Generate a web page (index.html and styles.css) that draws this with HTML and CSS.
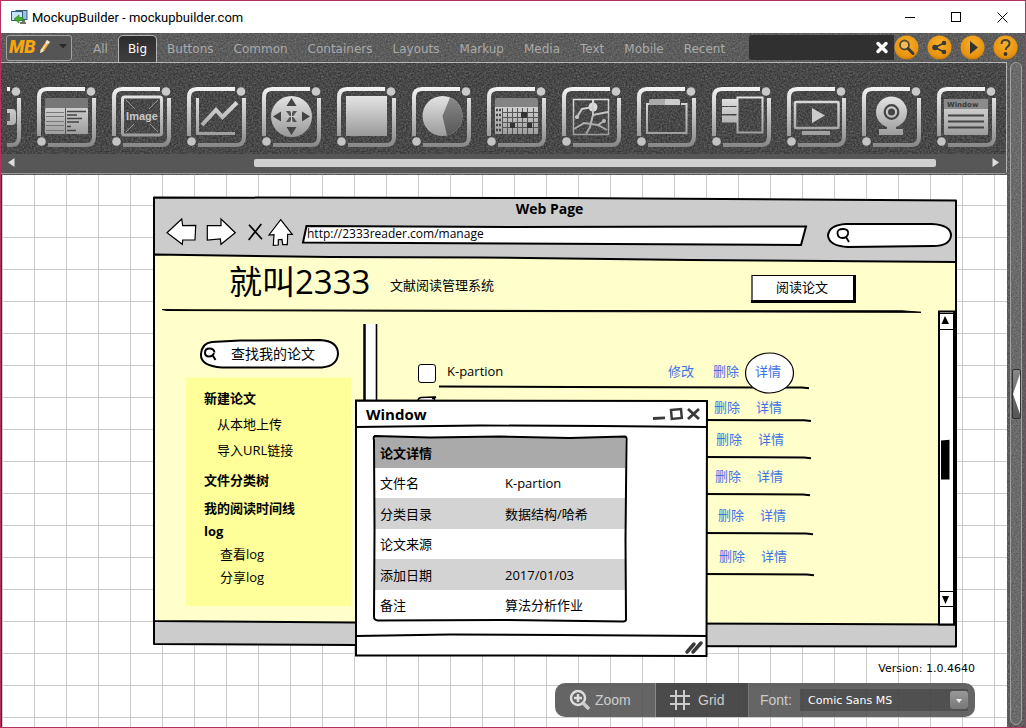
FILE: index.html
```html
<!DOCTYPE html>
<html lang="zh-CN">
<head>
<meta charset="utf-8">
<title>MockupBuilder - mockupbuilder.com</title>
<link rel="stylesheet" href="styles.css">
</head>
<body>
<svg class="defs" width="0" height="0" aria-hidden="true">
  <defs>
    <linearGradient id="metal" gradientUnits="userSpaceOnUse" x1="0" y1="0" x2="0" y2="60">
      <stop offset="0" stop-color="#f4f4f4"/><stop offset="1" stop-color="#868686"/>
    </linearGradient>
    <linearGradient id="steel" gradientUnits="userSpaceOnUse" x1="0" y1="8" x2="0" y2="50">
      <stop offset="0" stop-color="#8c8c8c"/><stop offset="1" stop-color="#555"/>
    </linearGradient>
    <radialGradient id="amber" cx="50%" cy="35%" r="65%">
      <stop offset="0" stop-color="#f7b02c"/><stop offset="0.8" stop-color="#e8930f"/><stop offset="1" stop-color="#c97c0c"/>
    </radialGradient>
    <g id="frame">
      <path d="M2 49V10q0-8 8-8H48M57 11V50q0 8-8 8H11" fill="none" stroke="url(#metal)" stroke-width="4"/>
      <circle cx="54" cy="4.500" r="4.300" fill="#c9c9c9"/>
      <circle cx="4.500" cy="54.500" r="4.300" fill="#c4c4c4"/>
    </g>
  </defs>
</svg>

<div class="window">
  <header class="titlebar">
    <svg class="titlebar-icon" width="17" height="14" viewBox="0 0 17 14">
      <rect x="5" y="0.500" width="11" height="9" fill="#8fc4ea" stroke="#3b5c78"/>
      <rect x="0.500" y="1.500" width="11" height="9" fill="#c5e3f7" stroke="#3b5c78"/>
      <path d="M9 13h6M11 11h3" stroke="#444" stroke-width="1.500"/>
      <path d="M3 9l5-4v2.500h4v3H8V13z" fill="#43b02a" stroke="#2a7a18" stroke-width=".6"/>
    </svg>
    <h1 class="titlebar-text">MockupBuilder - mockupbuilder.com</h1>
    <div class="titlebar-buttons">
      <button type="button" aria-label="Minimize"><svg width="11" height="11"><path d="M0 5.500h10" stroke="#000"/></svg></button>
      <button type="button" aria-label="Maximize"><svg width="11" height="11"><rect x=".5" y=".5" width="9" height="9" fill="none" stroke="#000"/></svg></button>
      <button type="button" aria-label="Close"><svg width="11" height="11"><path d="M.5.5l10 10M10.500.5l-10 10" stroke="#000"/></svg></button>
    </div>
  </header>

  <div class="app">
    <div class="topbar">
      <button type="button" class="logo" aria-label="Menu">
        <span class="logo-text">MB</span>
        <svg width="12" height="15" viewBox="0 0 12 15">
          <path d="M1 14l1-4 6-9 3 2-6 9z" fill="#f2a93b"/><path d="M8 1l3 2-1.500 2-3-2z" fill="#e9dccb"/><path d="M1 14l1-4 3 2z" fill="#f5e2c0"/><path d="M3 11l5.500-8" stroke="#fff" stroke-width="1"/>
        </svg>
        <svg width="8" height="5"><path d="M0 0h8L4 4.500z" fill="#2a2a2a"/></svg>
      </button>
      <nav class="tabs">
        <a href="#all">All</a>
        <a href="#big" class="active">Big</a>
        <a href="#buttons">Buttons</a>
        <a href="#common">Common</a>
        <a href="#containers">Containers</a>
        <a href="#layouts">Layouts</a>
        <a href="#markup">Markup</a>
        <a href="#media">Media</a>
        <a href="#text">Text</a>
        <a href="#mobile">Mobile</a>
        <a href="#recent">Recent</a>
      </nav>
      <div class="finder">
        <input type="text" aria-label="Search components">
        <button type="button" aria-label="Clear"><svg width="14" height="14" viewBox="0 0 14 14"><path d="M3 2.500l8 8M11 2.500l-8 8" stroke="#fff" stroke-width="3.500" stroke-linecap="round"/></svg></button>
      </div>
      <div class="actions">
        <button type="button" aria-label="Search"><svg viewBox="0 0 25 25"><circle cx="12.500" cy="12.500" r="12" fill="url(#amber)"/><circle cx="10.500" cy="10" r="4.500" fill="#f3bd5c" stroke="#5b4a2e" stroke-width="1.800"/><path d="M14 13.500l5 5" stroke="#3b3b3b" stroke-width="3" stroke-linecap="round"/></svg></button>
        <button type="button" aria-label="Share"><svg viewBox="0 0 25 25"><circle cx="12.500" cy="12.500" r="12" fill="url(#amber)"/><path d="M17 8L8 12.500l9 4.500" fill="none" stroke="#3a3a3a" stroke-width="1.800"/><circle cx="17" cy="8" r="2.300" fill="#3a3a3a"/><circle cx="8" cy="12.500" r="2.800" fill="#3a3a3a"/><circle cx="17" cy="17" r="2.300" fill="#3a3a3a"/></svg></button>
        <button type="button" aria-label="Play"><svg viewBox="0 0 25 25"><circle cx="12.500" cy="12.500" r="12" fill="url(#amber)"/><path d="M10 6l8 6.500-8 6.500z" fill="#333"/></svg></button>
        <button type="button" aria-label="Help"><svg viewBox="0 0 25 25"><circle cx="12.500" cy="12.500" r="12" fill="url(#amber)"/><path d="M8.500 9q0-4 4-4t4 3.500q0 2-2 3.300-1.700 1.200-1.700 3.200" fill="none" stroke="#4a4030" stroke-width="2"/><circle cx="12.500" cy="19" r="1.900" fill="#333"/></svg></button>
      </div>
    </div>

    <div class="body">
      <main class="work">
        <section class="ribbon">
          <div class="tiles">
            <svg class="tile" viewBox="0 0 60 60"><use href="#frame"/><path d="M40 22h10q4 0 4 4v8q0 4-4 4H40z" fill="url(#metal)"/><path d="M44 26h4v8h-4z" fill="#555"/></svg>
            <svg class="tile" viewBox="0 0 60 60"><use href="#frame"/>
              <rect x="8" y="21" width="43" height="26" rx="1" fill="url(#metal)"/><rect x="8" y="11" width="43" height="10" rx="1" fill="#777"/>
              <path d="M28.500 21v26" stroke="#555"/><path d="M9 25.500h18M9 29.500h18M9 34.500h18M9 38.500h18M9 43.500h18" stroke="#777"/>
              <path d="M30 24.500h19M30 28h10M30 31.500h15M30 35h12M30 39.500h4M30 43.500h9" stroke="#444" stroke-width="1.500"/></svg>
            <svg class="tile" viewBox="0 0 60 60"><use href="#frame"/>
              <rect x="10.500" y="10" width="39" height="38" rx="2" fill="none" stroke="url(#metal)" stroke-width="3"/>
              <path d="M14 13l9 9M46 13l-9 9M14 45l8-8M46 45l-8-8" stroke="#999" stroke-width="1"/>
              <text x="30" y="33" class="tile-image">Image</text></svg>
            <svg class="tile" viewBox="0 0 60 60"><use href="#frame"/><path d="M10.500 11v35.500H48" fill="none" stroke="url(#metal)" stroke-width="3"/><path d="M15 38l14-15 6.500 7L50 15.500" fill="none" stroke="url(#metal)" stroke-width="4"/></svg>
            <svg class="tile" viewBox="0 0 60 60"><use href="#frame"/><circle cx="29.500" cy="29.500" r="20.500" fill="url(#metal)"/>
              <path d="M29.500 11l5 8h-10zM29.500 48l5-8h-10zM11 29.500l8-5v10zM48 29.500l-8-5v10z" fill="#444"/>
              <path d="M24 24h4l1.500 3 1.500-3h4l-4 5.500 4 5.500h-4l-1.500-3-1.500 3h-4l4-5.500z" fill="#555"/><path d="M29.500 23.500v12M23 29.500h13" stroke="#ccc"/></svg>
            <svg class="tile" viewBox="0 0 60 60"><use href="#frame"/><rect x="9" y="9" width="41" height="40" fill="url(#metal)"/></svg>
            <svg class="tile" viewBox="0 0 60 60"><use href="#frame"/><circle cx="30.500" cy="29" r="20" fill="url(#metal)"/><path d="M30.500 29L38 10.500A20 20 0 0 1 35 48.500z" fill="url(#steel)"/></svg>
            <svg class="tile" viewBox="0 0 60 60"><use href="#frame"/><rect x="8" y="20" width="43" height="27" fill="url(#metal)"/><path d="M8 20v-7q0-2 2-2h39q2 0 2 2v7z" fill="#848484"/>
              <path d="M15.500 21v26M20.500 21v26M25.500 21v26M30.500 21v26M35.500 21v26M40.500 21v26M46.500 21v26M15 25.500h36M15 30.500h36M15 35.500h36M15 40.500h36" stroke="#555" stroke-width="1"/>
              <path d="M34 25h6v6h-6zM23 36h5v5h-5zM40 36h5v5h-5z" fill="#333"/><path d="M9 23h5M9 28h5M9 33h5M9 38h5M9 43h5" stroke="#444" stroke-width="2.500" stroke-dasharray="2 1"/></svg>
            <svg class="tile" viewBox="0 0 60 60"><use href="#frame"/><rect x="11.500" y="12.500" width="35" height="35" fill="none" stroke="url(#metal)" stroke-width="1.500"/>
              <circle cx="31" cy="20" r="4.500" fill="#ddd"/><circle cx="15" cy="30" r="2" fill="#ccc"/><circle cx="42" cy="34" r="2" fill="#bbb"/>
              <path d="M31 13v7M31 20l-11 2-5 8M31 20v8l-3 12-4 7M31 28l15-3M12 42l10-6 14 2 6-4M36 38l9 5" fill="none" stroke="url(#metal)" stroke-width="2"/></svg>
            <svg class="tile" viewBox="0 0 60 60"><use href="#frame"/><path d="M12 17H10v29h39.500V17H44" fill="none" stroke="url(#metal)" stroke-width="2"/><path d="M12 18v-4q0-2 2-2h27q2 0 2 2v4z" fill="#aaa"/><path d="M28 12h13q2 0 2 2v4H28z" fill="#ccc"/></svg>
            <svg class="tile" viewBox="0 0 60 60"><use href="#frame"/><rect x="25.500" y="10.500" width="25" height="35" fill="none" stroke="url(#metal)" stroke-width="2"/><path d="M10 12h15v7H10zM10 20h15v7H10zM10 28.500h15v7H10z" fill="url(#metal)"/></svg>
            <svg class="tile" viewBox="0 0 60 60"><use href="#frame"/><rect x="8" y="15" width="43.500" height="26" rx="1" fill="none" stroke="url(#metal)" stroke-width="2.500"/><path d="M25 21l13 7.500L25 36z" fill="#ccc"/><path d="M15 44h28v4H15z" fill="url(#metal)"/></svg>
            <svg class="tile" viewBox="0 0 60 60"><use href="#frame"/><circle cx="29.500" cy="25" r="15.500" fill="url(#metal)"/><path d="M25 38h9v4h7v6H17v-6h8z" fill="url(#metal)"/><circle cx="29.500" cy="25" r="6.800" fill="none" stroke="#444" stroke-width="2.200"/><circle cx="29.500" cy="25" r="3.500" fill="#444"/></svg>
            <svg class="tile" viewBox="0 0 60 60"><use href="#frame"/><rect x="7" y="12" width="44" height="36" rx="1" fill="url(#metal)"/><path d="M7 12h44v10H7z" fill="#8b8b8b"/><text x="10" y="20" class="tile-window">Window</text><path d="M11 28.500h36M11 34.500h36M11 40.500h36" stroke="#444" stroke-width="2"/></svg>
          </div>
          <div class="hscroll">
            <button type="button" aria-label="Scroll left"><svg width="7" height="9"><path d="M6.500 0v9L0 4.500z" fill="#ddd"/></svg></button>
            <div class="hscroll-track"><div class="hscroll-thumb"></div></div>
            <button type="button" aria-label="Scroll right"><svg width="7" height="9"><path d="M.5 0v9L7 4.500z" fill="#ddd"/></svg></button>
          </div>
        </section>

        <section class="canvas">
          <article class="page">
            <svg class="sketch" viewBox="153 196 805 452" width="805" height="452" aria-hidden="true">
              <g stroke="#000" stroke-width="2" stroke-linejoin="round">
                <path d="M154 197.500L560 198 956 200.500V646.500L560 646 154 644z" fill="#ccc"/>
                <path d="M154 254.500L330 257 480 257.500 690 260 956 262V624.500L355 622.500 154 621z" fill="#ffffcc"/>
              </g>
              <g fill="#fff" stroke="#000" stroke-width="1.200">
                <path d="M167 232.700L181.700 219l1 6.700 13-.4-.7 14.700h-12.300l-.4 4.300z"/>
                <path d="M207.300 225.700H221V219l14.300 13.700L221 244.300l-.7-5.300-13 1z"/>
                <path d="M280.700 219.700l11.600 14.600h-4.600l-.4 10.400h-4.600l-.7-5.400-3.700.4v5.300l-5 .3.700-10.600-5 .3z"/>
                <path d="M249 224.700l13 14.600M261.300 224l-12.600 16" stroke-width="1.700"/>
              </g>
              <g fill="#fff" stroke="#000" stroke-width="2">
                <path d="M306.500 226L510 227 806 226.500 801 245 510 243.500 303 242.500z"/>
                <path d="M846 224H932Q951 225 951 235.500 950 246 933 246L848 247Q829 246 828 235.500 829 225 846 224z"/>
                <path d="M212 342L240 340.500 320 340Q338 341 338 354 337 366 322 367.500L222 367.500Q200 366 201 354 202 343 212 342z"/>
              </g>
              <g fill="none" stroke="#000" stroke-width="1.800">
                <path d="M848 234q-1 4-5.500 4t-5-4.500 5.500-4.500 5 5M846 237l3 5"/>
                <path d="M214 353q-1 3.500-5 3.500t-4-4 4.500-4 5 4M212.500 355l3 5" stroke-width="2"/>
              </g>
              <path d="M162 309.500l30 .3 370 .7 340 .3 19 1.500h-19L500 311.500 167 310.500z" fill="#000" stroke="#000"/>
              <path d="M365.500 324H376V404H365.500z" fill="#fff"/><path d="M364.500 324V404" stroke="#000" stroke-width="2.500"/><path d="M376.500 324V404" stroke="#000" stroke-width="1.600"/>
              <path d="M186 377.500H351V606H186z" fill="#ffff99"/>
              <path d="M752 275.500H855V301.500H752z" fill="#fff" stroke="#000" stroke-width="1.200"/><path d="M751 301.500H854.500V275" fill="none" stroke="#000" stroke-width="3"/>
              <g fill="none" stroke="#000" stroke-width="2">
                <path d="M439 386.500L570 387 802 387.500l7 .8"/><path d="M700 420l104 .3 7 .8"/><path d="M700 457l104 .5 7 .8"/><path d="M700 494l103 .5 7 .8"/><path d="M700 533l106 .5 7 .8"/><path d="M700 574l107 .5 7 .8"/>
              </g>
              <path d="M418 401q0-3 3-3.500l13-.5 1 6" fill="#fff" stroke="#000" stroke-width="1.500"/><path d="M432 398.500l4-1.500" stroke="#000" stroke-width="2"/>
              <ellipse cx="769.500" cy="373" rx="24" ry="20" fill="#fff" stroke="#000" stroke-width="1.200"/>
              <path d="M939 311.500H955V624.500H939z" fill="#fff" stroke="#000" stroke-width="2"/><path d="M954 312V624" stroke="#000" stroke-width="2"/>
              <path d="M940 313.500H953M940 329.500H953M940 591.500H953M940 606.500H953" stroke="#000" stroke-width="1.200"/>
              <path d="M945 316l4 8h-7.500zM945.500 604l-3.500-8h7z" fill="#000"/><path d="M941 440.500l8.500-.8V479.500H941z" fill="#000"/>
            </svg>

            <h2 class="page-title">Web Page</h2>
            <input class="address" type="text" aria-label="Address" value="http://2333reader.com/manage">
            <input class="page-search" type="text" aria-label="Search page">
            <p class="brand">就叫2333</p>
            <p class="tagline">文献阅读管理系统</p>
            <button type="button" class="read">阅读论文</button>

            <input class="side-search" type="text" aria-label="查找" value="查找我的论文">
            <nav class="side">
              <h3>新建论文</h3>
              <a href="#upload">从本地上传</a>
              <a href="#import">导入URL链接</a>
              <h3>文件分类树</h3>
              <h3>我的阅读时间线</h3>
              <h3 class="tight">log</h3>
              <a href="#viewlog" class="log">查看log</a>
              <a href="#sharelog" class="log">分享log</a>
            </nav>

            <label class="paper"><input type="checkbox"><span>K-partion</span></label>
            <div class="links row-1"><a href="#e1">修改</a><a href="#d1">删除</a><a href="#i1">详情</a></div>
            <div class="links row-2"><a href="#d2">删除</a><a href="#i2">详情</a></div>
            <div class="links row-3"><a href="#d3">删除</a><a href="#i3">详情</a></div>
            <div class="links row-4"><a href="#d4">删除</a><a href="#i4">详情</a></div>
            <div class="links row-5"><a href="#d5">删除</a><a href="#i5">详情</a></div>
            <div class="links row-6"><a href="#d6">删除</a><a href="#i6">详情</a></div>
          </article>

          <article class="dialog">
            <svg class="sketch" viewBox="354 399 354 258" width="354" height="258" aria-hidden="true">
              <path d="M356 400.500L707 401 706.500 656 530 655.500 356 655.500z" fill="#fff" stroke="#000" stroke-width="2"/>
              <path d="M356 427L480 425.500 600 426 707 427M356 636L450 634.500 560 635 707 636" fill="none" stroke="#000" stroke-width="2"/>
              <g fill="none" stroke="#3a3a3a" stroke-width="2.800">
                <path d="M653 418.500l12-.7"/><path d="M671 410l10-1 .8 9-10 1z" stroke-width="2.500"/><path d="M688 409l11 10M699 409l-11 10"/>
                <path d="M687 652l7-8M693 652l8-9" stroke-width="3.500" stroke-linecap="round"/>
              </g>
            </svg>
            <h2 class="dialog-title">Window</h2>
            <div class="details">
              <table>
                <thead><tr><th>论文详情</th><th></th></tr></thead>
                <tbody>
                  <tr><td>文件名</td><td>K-partion</td></tr>
                  <tr><td>分类目录</td><td>数据结构/哈希</td></tr>
                  <tr><td>论文来源</td><td></td></tr>
                  <tr><td>添加日期</td><td>2017/01/03</td></tr>
                  <tr><td>备注</td><td>算法分析作业</td></tr>
                </tbody>
              </table>
              <svg class="sketch" viewBox="372 435 256 188" width="256" height="188" aria-hidden="true">
                <path d="M375 436L430 437.500 500 436.500 570 438 625 436.500Q627 437 626.500 441L625.500 540 626 619.500Q626 621.500 623 621.500L500 620 378 620.500Q374 620 374 617L374.500 530 374 440Q373 437 375 436z" fill="none" stroke="#000" stroke-width="2"/>
              </svg>
            </div>
          </article>

          <div class="dock">
            <p class="version">Version: 1.0.4640</p>
            <div class="dock-bar">
              <button type="button" class="dock-zoom"><svg width="22" height="22" viewBox="0 0 22 22"><circle cx="9" cy="9" r="7" fill="none" stroke="#ddd" stroke-width="2.500"/><path d="M9 5v8M5 9h8" stroke="#ddd" stroke-width="2.500"/><path d="M14 14l6 6" stroke="#ccc" stroke-width="3.500"/></svg>Zoom</button>
              <button type="button" class="dock-grid"><svg width="20" height="20" viewBox="0 0 20 20"><path d="M6 0v20M14 0v20M0 6h20M0 14h20" stroke="#ccc" stroke-width="2"/></svg>Grid</button>
              <label class="dock-label" for="font">Font:</label>
              <div class="dock-select">
                <select id="font"><option>Comic Sans MS</option></select>
                <span class="dock-arrow"></span>
              </div>
            </div>
          </div>
        </section>
      </main>
      <aside class="rail">
        <div class="rail-tube">
          <button type="button" aria-label="Open panel"><svg width="7" height="40"><path d="M7 0v40L0 20z" fill="#fff"/></svg></button>
        </div>
      </aside>
    </div>
  </div>
</div>
</body>
</html>
```

FILE: styles.css
```css
* { box-sizing: border-box; margin: 0; padding: 0; }

:root {
  --ui: "DejaVu Sans", Verdana, sans-serif;
  --hand: "Comic Sans MS", "Open Sans", "Noto Sans CJK SC", sans-serif;
  --noise: url("data:image/svg+xml,%3Csvg xmlns='http://www.w3.org/2000/svg' width='128' height='128'%3E%3Cfilter id='n'%3E%3CfeTurbulence type='fractalNoise' baseFrequency='.6' numOctaves='2' stitchTiles='stitch'/%3E%3CfeColorMatrix values='0 0 0 0 .5 0 0 0 0 .5 0 0 0 0 .5 .6 0 0 0 -.15'/%3E%3C/filter%3E%3Crect width='128' height='128' filter='url(%23n)'/%3E%3C/svg%3E");
}

.defs { position: absolute; }

button, input, select { font: inherit; color: inherit; background: none; border: 0; outline: 0; }
button { cursor: pointer; }
a { color: inherit; text-decoration: none; }

.window {
  display: flex;
  flex-direction: column;
  height: 100vh;
  border: 1px solid #b5305f;
  background: #fff;
  overflow: hidden;
}

/* Title bar */
.titlebar { display: flex; align-items: center; height: 32px; padding-left: 10px; flex: none; }
.titlebar-text { margin-left: 4px; font: 13px Roboto, "Open Sans", sans-serif; color: #000; }
.titlebar-buttons { display: flex; margin-left: auto; }
.titlebar-buttons button { display: flex; align-items: center; justify-content: center; width: 46px; height: 30px; }

/* Top bar */
.app { display: flex; flex-direction: column; flex: 1; min-height: 0; background: var(--noise) #4c4c4c; }
.topbar { display: flex; align-items: center; height: 29px; padding: 0 7px 0 5px; flex: none; font: 12px var(--ui); }
.logo {
  display: flex;
  align-items: center;
  gap: 3px;
  width: 66px;
  height: 26px;
  padding: 0 4px 2px 2px;
  border: 1px solid #a0a0a0;
  border-radius: 3px;
  background: #555;
}
.logo-text { font: italic 900 18px Roboto, "Liberation Sans", sans-serif; color: #f7a60f; }
.logo svg:last-child { margin-left: auto; }
.tabs { display: flex; align-self: flex-end; flex: 1; margin-left: 11px; color: #a9a9a9; }
.tabs a { height: 27px; padding: 6px 9px 0; border: 1px solid transparent; border-bottom: 0; }
.tabs .active {
  height: 28px;
  margin-bottom: -1px;
  border-color: #b5b5b5;
  border-radius: 5px 5px 0 0;
  background: linear-gradient(#2c2c2c, #404040);
  color: #fff;
}
.finder { display: flex; align-items: center; width: 145px; height: 25px; background: #303030; border-radius: 3px 0 0 3px; }
.finder input { flex: 1; min-width: 0; height: 25px; padding: 0 6px; color: #fff; }
.finder button { display: flex; margin-right: 5px; }
.actions { display: flex; gap: 8px; }
.actions button, .actions svg { display: block; width: 25px; height: 25px; }

.body { display: flex; flex: 1; min-height: 0; }
.work { display: flex; flex-direction: column; flex: 1; min-width: 0; }

/* Ribbon */
.ribbon {
  flex: none;
  border: 1px solid #b5b5b5;
  border-left: 0;
  border-bottom-color: #9a9a9a;
  border-radius: 0 0 3px 0;
  background: var(--noise) #343434;
}
.tiles { display: flex; justify-content: flex-end; gap: 15px; margin-left: 6px; padding: 24px 9px 7px 0; overflow: hidden; }
.tile { width: 60px; height: 60px; flex: none; }
.tile-image { font: bold 11px "Liberation Sans", sans-serif; fill: #c8c8c8; text-anchor: middle; }
.tile-window { font: bold 7px var(--ui); fill: #3a3a3a; }
.hscroll { display: flex; align-items: center; height: 19px; padding: 0 7px 2px; background: #575757; }
.hscroll button { display: flex; }
.hscroll-track { flex: 1; display: flex; justify-content: flex-end; padding-right: 56px; }
.hscroll-thumb { width: 74%; height: 8px; border-radius: 2px; background: #d0d0d0; }

/* Drawing canvas */
.canvas {
  position: relative;
  flex: 1;
  margin-top: 1px;
  overflow: hidden;
  background:
    linear-gradient(90deg, #ccc 1px, transparent 1px) 0 0 / 32px 32px,
    linear-gradient(#ccc 1px, transparent 1px) 0 30px / 32px 32px,
    #fff;
  border-left: 1px solid #333;
  font: 13px/18px var(--hand);
  color: #000;
}
.sketch { position: absolute; left: 0; top: 0; pointer-events: none; }
.page { position: absolute; left: 151px; top: 21px; width: 805px; height: 452px; }
.page > :not(.sketch) { position: absolute; }
.page-title { left: 0; right: 0; top: 4px; font-size: 14px; text-align: center; padding-right: 12px; }
.address { left: 154px; top: 30px; width: 490px; height: 16px; font-size: 12px; }
.page-search { left: 700px; top: 30px; width: 92px; height: 18px; }
.brand { left: 76px; top: 64px; font-size: 33px; line-height: 44px; white-space: nowrap; }
.tagline { left: 237px; top: 80px; white-space: nowrap; }
.read { left: 598px; top: 78px; width: 102px; height: 26px; }
.side-search { left: 78px; top: 147px; width: 100px; height: 20px; font-size: 14px; }

.side { display: flex; flex-direction: column; left: 33px; top: 181px; width: 165px; padding: 12px 18px; }
.side h3 { margin-bottom: 10px; font-size: 13px; line-height: 18px; }
.side a { margin: 0 0 8px 13px; line-height: 18px; }
.side h3:first-child { margin-bottom: 8px; }
.side a + h3 { margin-top: 4px; }
.side h3 + h3.tight { margin: -5px 0 5px; }
.side .log { margin: 0 0 5px 16px; }

.paper { left: 265px; top: 166px; display: flex; align-items: flex-start; gap: 11px; }
.paper input { appearance: none; width: 18px; height: 19px; margin-top: 2px; border: 1px solid #000; border-radius: 3px; background: #fff; }
.links { display: flex; gap: 16px; color: #3f72e4; white-space: nowrap; }
.row-1 { left: 515px; top: 166px; }
.row-1 a:first-child { margin-right: 3px; }
.row-2 { left: 561px; top: 202px; }
.row-3 { left: 563px; top: 234px; }
.row-4 { left: 562px; top: 271px; }
.row-5 { left: 565px; top: 310px; }
.row-6 { left: 566px; top: 351px; }

/* Dialog placed on the canvas */
.dialog { position: absolute; left: 352px; top: 224px; width: 354px; height: 258px; }
.dialog-title { position: relative; padding: 5px 12px; font-size: 15px; line-height: 20px; }
.details { position: relative; width: 256px; margin: 6px 0 0 18px; padding: 2px 3px; }
.details table { width: 100%; border-collapse: collapse; }
.details th, .details td { height: 30px; padding: 0 5px; text-align: left; }
.details th { height: 31px; background: #aaa; }
.details th:first-child, .details td:first-child { width: 125px; }
.details tbody tr:nth-child(even) { background: #d3d3d3; }
.details tbody tr:nth-child(even) td { height: 31px; }

/* Bottom dock */
.dock { position: absolute; right: 32px; bottom: 10px; width: 420px; font: 14px "Liberation Sans", sans-serif; color: #ccc; }
.version { margin-bottom: 7px; font: 11px/14px var(--ui); color: #000; text-align: right; }
.dock-bar { display: flex; align-items: center; height: 34px; border-radius: 10px; background: rgba(80, 80, 80, .88); overflow: hidden; }
.dock-bar button { display: flex; align-items: center; height: 34px; gap: 4px; }
.dock-zoom { width: 101px; padding-left: 14px; border-right: 1px solid #8a8a8a; }
.dock-bar .dock-grid { width: 93px; padding-left: 14px; gap: 8px; background: rgba(50, 50, 50, .5); border-right: 1px solid #777; }
.dock-label { width: 51px; padding-left: 11px; }
.dock-select { position: relative; flex: 1; margin-right: 7px; }
.dock-select select { appearance: none; width: 100%; height: 22px; padding-left: 8px; background: rgba(50, 50, 50, .4); font: 11px var(--ui); color: #fff; }
.dock-arrow { position: absolute; right: 0; top: 2px; width: 18px; height: 18px; border-radius: 3px; background: linear-gradient(#999, #777); pointer-events: none; }
.dock-arrow::after { content: ""; position: absolute; left: 6px; top: 8px; border: 3px solid transparent; border-top: 4px solid #eee; border-bottom: 0; }

/* Right rail */
.rail { display: flex; width: 18px; padding: 0 3px 2px; flex: none; }
.rail-tube { display: flex; align-items: center; justify-content: center; flex: 1; border: 1px solid #a0a0a0; border-radius: 6px; background: var(--noise) #5c5c5c; }
.rail-tube button { display: flex; align-items: center; justify-content: center; width: 9px; height: 50px; flex: none; border: 1px solid #333; border-radius: 2px; background: linear-gradient(#888, #555); }
```
